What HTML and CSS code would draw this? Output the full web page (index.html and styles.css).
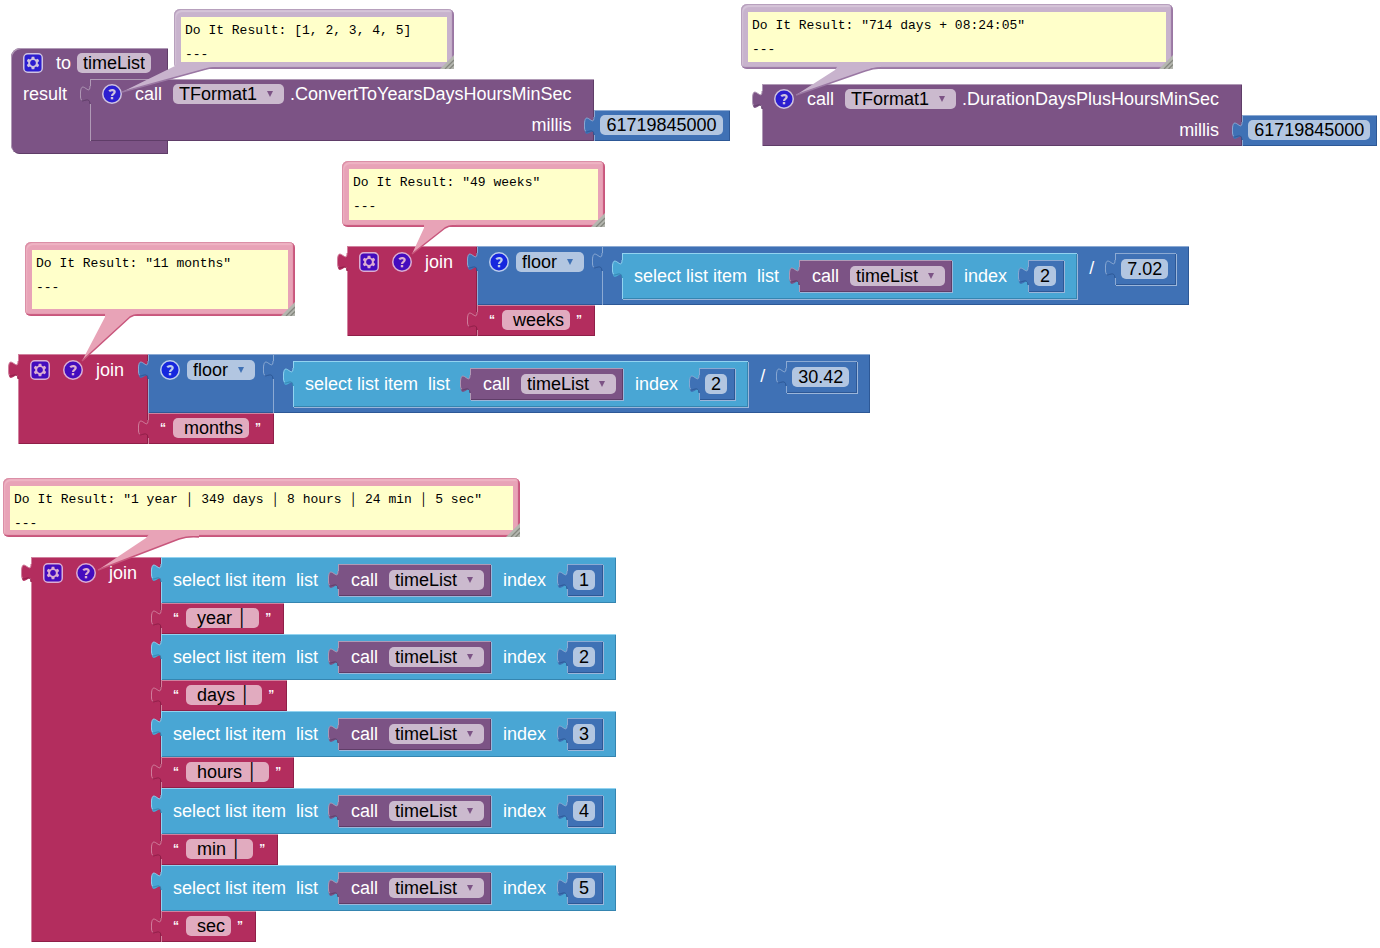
FILE: index.html
```html
<!DOCTYPE html>
<html lang="en">
<head>
<meta charset="utf-8">
<title>Blocks workspace</title>
<link rel="stylesheet" href="styles.css">
</head>
<body>
<svg class="defs" aria-hidden="true">
  <symbol id="tab" viewBox="0 0 12 18">
    <path class="tab-fill" d="M10,0 c0,12 -9.6,-9.6 -9.6,9 s9.6,-3 9.6,9 h2 V0 z"/>
    <path class="tab-dark" d="M1.5,14.5 C3,16.5 9.5,10 10,18"/>
    <path class="tab-light" d="M10,0 c0,12 -9.6,-9.6 -9.6,9 q0,4 1.2,5.4"/>
  </symbol>
  <symbol id="gear" viewBox="0 0 20 20">
    <rect class="icon-bg" x="0.75" y="0.75" width="18.5" height="18.5" rx="4"/>
    <path class="icon-fg" fill-rule="evenodd" d="M8.7,3.8 h2.6 l.4,1.9 1.3,.7 1.9,-.7 1.3,2.3 -1.4,1.3 v1.4 l1.4,1.3 -1.3,2.3 -1.9,-.7 -1.3,.7 -.4,1.9 h-2.6 l-.4,-1.9 -1.3,-.7 -1.9,.7 -1.3,-2.3 1.4,-1.3 v-1.4 l-1.4,-1.3 1.3,-2.3 1.9,.7 1.3,-.7 z M10,7.1 a2.9,2.9 0 1 0 .01,0 z"/>
  </symbol>
  <symbol id="help" viewBox="0 0 20 20">
    <circle class="icon-bg" cx="10" cy="10" r="9.25"/>
    <path class="icon-stroke" d="M7.2,7.2 C8.6,5.6 12.7,5.5 12.7,8 C12.7,9.8 10,9.8 10,12"/>
    <rect class="icon-fg" x="8.8" y="13" width="2.4" height="2.3"/>
  </symbol>
  <symbol id="grip" viewBox="0 0 14 14">
    <path fill="#b4b6af" d="M14,0 V14 H0 z"/>
    <path stroke="#85877f" stroke-width="1.3" d="M5,14 L14,5 M9.5,14 L14,9.5"/>
  </symbol>
</svg>

<main class="workspace">

  <section class="group at-procedure">
    <div class="procedure purple">
      <div class="row">
        <button class="icon" aria-label="Settings"><svg><use href="#gear"/></svg></button>
        <label for="proc">to</label>
        <input class="field" id="proc" value="timeList">
      </div>
      <div class="result-row">
        <span class="result">result</span>
        <div class="component">
          <div class="block purple method">
            <svg class="tab"><use href="#tab"/></svg>
            <div class="row">
              <button class="icon" aria-label="Comment"><svg><use href="#help"/></svg></button>
              <label class="verb" for="c1">call</label>
              <span class="drop"><select id="c1"><option>TFormat1</option></select></span>
              <span>.ConvertToYearsDaysHoursMinSec</span>
            </div>
            <label class="argument" for="n1">millis</label>
          </div>
          <div class="block blue value"><svg class="tab"><use href="#tab"/></svg><input class="field" id="n1" value="61719845000"></div>
        </div>
      </div>
    </div>
  </section>

  <section class="group at-duration">
    <div class="component">
      <div class="block purple method">
        <svg class="tab"><use href="#tab"/></svg>
        <div class="row">
          <button class="icon" aria-label="Comment"><svg><use href="#help"/></svg></button>
          <label class="verb" for="c2">call</label>
          <span class="drop"><select id="c2"><option>TFormat1</option></select></span>
          <span>.DurationDaysPlusHoursMinSec</span>
        </div>
        <label class="argument" for="n2">millis</label>
      </div>
      <div class="block blue value"><svg class="tab"><use href="#tab"/></svg><input class="field" id="n2" value="61719845000"></div>
    </div>
  </section>

  <section class="group join at-weeks">
    <div class="block magenta join-head">
      <svg class="tab"><use href="#tab"/></svg>
      <button class="icon" aria-label="Settings"><svg><use href="#gear"/></svg></button>
      <button class="icon" aria-label="Comment"><svg><use href="#help"/></svg></button>
      <span>join</span>
    </div>
    <div class="inputs">
      <div class="block blue floor">
        <svg class="tab"><use href="#tab"/></svg>
        <div class="floor-head">
          <button class="icon" aria-label="Comment"><svg><use href="#help"/></svg></button>
          <span class="drop"><select aria-label="Rounding"><option>floor</option></select></span>
        </div>
        <div class="block blue divide">
          <svg class="tab"><use href="#tab"/></svg>
          <div class="block sky select-item inset">
            <svg class="tab"><use href="#tab"/></svg>
            <span>select list item</span><span class="list">list</span>
            <div class="block purple getter inset"><svg class="tab"><use href="#tab"/></svg><label class="verb" for="w1">call</label><span class="drop"><select id="w1"><option>timeList</option></select></span></div>
            <label class="index" for="w2">index</label>
            <div class="block blue number inset"><svg class="tab"><use href="#tab"/></svg><input class="field" id="w2" value="2"></div>
          </div>
          <span class="operator">/</span>
          <div class="block blue number inset"><svg class="tab"><use href="#tab"/></svg><input class="field" aria-label="Divisor" value="7.02"></div>
        </div>
      </div>
      <div class="block magenta text"><svg class="tab"><use href="#tab"/></svg><span class="quote">“</span><input class="field" aria-label="Text" value=" weeks"><span class="quote">”</span></div>
    </div>
  </section>

  <section class="group join at-months">
    <div class="block magenta join-head">
      <svg class="tab"><use href="#tab"/></svg>
      <button class="icon" aria-label="Settings"><svg><use href="#gear"/></svg></button>
      <button class="icon" aria-label="Comment"><svg><use href="#help"/></svg></button>
      <span>join</span>
    </div>
    <div class="inputs">
      <div class="block blue floor">
        <svg class="tab"><use href="#tab"/></svg>
        <div class="floor-head">
          <button class="icon" aria-label="Comment"><svg><use href="#help"/></svg></button>
          <span class="drop"><select aria-label="Rounding"><option>floor</option></select></span>
        </div>
        <div class="block blue divide">
          <svg class="tab"><use href="#tab"/></svg>
          <div class="block sky select-item inset">
            <svg class="tab"><use href="#tab"/></svg>
            <span>select list item</span><span class="list">list</span>
            <div class="block purple getter inset"><svg class="tab"><use href="#tab"/></svg><label class="verb" for="m1">call</label><span class="drop"><select id="m1"><option>timeList</option></select></span></div>
            <label class="index" for="m2">index</label>
            <div class="block blue number inset"><svg class="tab"><use href="#tab"/></svg><input class="field" id="m2" value="2"></div>
          </div>
          <span class="operator">/</span>
          <div class="block blue number inset"><svg class="tab"><use href="#tab"/></svg><input class="field" aria-label="Divisor" value="30.42"></div>
        </div>
      </div>
      <div class="block magenta text"><svg class="tab"><use href="#tab"/></svg><span class="quote">“</span><input class="field" aria-label="Text" value=" months"><span class="quote">”</span></div>
    </div>
  </section>

  <section class="group join at-summary">
    <div class="block magenta join-head">
      <svg class="tab"><use href="#tab"/></svg>
      <button class="icon" aria-label="Settings"><svg><use href="#gear"/></svg></button>
      <button class="icon" aria-label="Comment"><svg><use href="#help"/></svg></button>
      <span>join</span>
    </div>
    <div class="inputs">
      <div class="block sky select-item">
        <svg class="tab"><use href="#tab"/></svg>
        <span>select list item</span><span class="list">list</span>
        <div class="block purple getter inset"><svg class="tab"><use href="#tab"/></svg><label class="verb" for="a1">call</label><span class="drop"><select id="a1"><option>timeList</option></select></span></div>
        <label class="index" for="b1">index</label>
        <div class="block blue number inset"><svg class="tab"><use href="#tab"/></svg><input class="field" id="b1" value="1"></div>
      </div>
      <div class="block magenta text"><svg class="tab"><use href="#tab"/></svg><span class="quote">“</span><input class="field" aria-label="Text" value=" year │ "><span class="quote">”</span></div>
      <div class="block sky select-item">
        <svg class="tab"><use href="#tab"/></svg>
        <span>select list item</span><span class="list">list</span>
        <div class="block purple getter inset"><svg class="tab"><use href="#tab"/></svg><label class="verb" for="a2">call</label><span class="drop"><select id="a2"><option>timeList</option></select></span></div>
        <label class="index" for="b2">index</label>
        <div class="block blue number inset"><svg class="tab"><use href="#tab"/></svg><input class="field" id="b2" value="2"></div>
      </div>
      <div class="block magenta text"><svg class="tab"><use href="#tab"/></svg><span class="quote">“</span><input class="field" aria-label="Text" value=" days │ "><span class="quote">”</span></div>
      <div class="block sky select-item">
        <svg class="tab"><use href="#tab"/></svg>
        <span>select list item</span><span class="list">list</span>
        <div class="block purple getter inset"><svg class="tab"><use href="#tab"/></svg><label class="verb" for="a3">call</label><span class="drop"><select id="a3"><option>timeList</option></select></span></div>
        <label class="index" for="b3">index</label>
        <div class="block blue number inset"><svg class="tab"><use href="#tab"/></svg><input class="field" id="b3" value="3"></div>
      </div>
      <div class="block magenta text"><svg class="tab"><use href="#tab"/></svg><span class="quote">“</span><input class="field" aria-label="Text" value=" hours │ "><span class="quote">”</span></div>
      <div class="block sky select-item">
        <svg class="tab"><use href="#tab"/></svg>
        <span>select list item</span><span class="list">list</span>
        <div class="block purple getter inset"><svg class="tab"><use href="#tab"/></svg><label class="verb" for="a4">call</label><span class="drop"><select id="a4"><option>timeList</option></select></span></div>
        <label class="index" for="b4">index</label>
        <div class="block blue number inset"><svg class="tab"><use href="#tab"/></svg><input class="field" id="b4" value="4"></div>
      </div>
      <div class="block magenta text"><svg class="tab"><use href="#tab"/></svg><span class="quote">“</span><input class="field" aria-label="Text" value=" min │ "><span class="quote">”</span></div>
      <div class="block sky select-item">
        <svg class="tab"><use href="#tab"/></svg>
        <span>select list item</span><span class="list">list</span>
        <div class="block purple getter inset"><svg class="tab"><use href="#tab"/></svg><label class="verb" for="a5">call</label><span class="drop"><select id="a5"><option>timeList</option></select></span></div>
        <label class="index" for="b5">index</label>
        <div class="block blue number inset"><svg class="tab"><use href="#tab"/></svg><input class="field" id="b5" value="5"></div>
      </div>
      <div class="block magenta text"><svg class="tab"><use href="#tab"/></svg><span class="quote">“</span><input class="field" aria-label="Text" value=" sec"><span class="quote">”</span></div>
    </div>
  </section>

  <div class="comment lilac note-procedure">
    <textarea aria-label="Comment">Do It Result: [1, 2, 3, 4, 5]
---</textarea>
    <svg class="tail"><path class="tail-fill" d="M3,55 L1,57 L-52,83 L33,60 Q38,58 46,58 V55 z"/><path class="tail-edge" d="M46,59 Q38,58 32,60 L-52,83"/></svg>
    <svg class="grip"><use href="#grip"/></svg>
  </div>
  <div class="comment lilac note-duration">
    <textarea aria-label="Comment">Do It Result: "714 days + 08:24:05"
---</textarea>
    <svg class="tail"><path class="tail-fill" d="M98,60 L94,66 L55,91 L124,67 Q132,63 140,63 V60 z"/><path class="tail-edge" d="M140,64 Q132,64 124,67 L55,91"/></svg>
    <svg class="grip"><use href="#grip"/></svg>
  </div>
  <div class="comment pink note-weeks">
    <textarea aria-label="Comment">Do It Result: "49 weeks"
---</textarea>
    <svg class="tail"><path class="tail-fill" d="M82,61 L82,67 L70,93 L103,67 Q108,64 114,64 V61 z"/><path class="tail-edge" d="M114,65 Q108,64 103,67 L70,93"/></svg>
    <svg class="grip"><use href="#grip"/></svg>
  </div>
  <div class="comment pink note-months">
    <textarea aria-label="Comment">Do It Result: "11 months"
---</textarea>
    <svg class="tail"><path class="tail-fill" d="M80,69 L80,75 L57,119 L105,75 Q110,72 116,72 V69 z"/><path class="tail-edge" d="M116,73 Q110,72 105,75 L57,119"/></svg>
    <svg class="grip"><use href="#grip"/></svg>
  </div>
  <div class="comment pink note-summary">
    <textarea aria-label="Comment">Do It Result: "1 year │ 349 days │ 8 hours │ 24 min │ 5 sec"
---</textarea>
    <svg class="tail"><path class="tail-fill" d="M147,55 L143,60 L95,92 L176,61 Q185,58 196,58 V55 z"/><path class="tail-edge" d="M196,59 Q185,58 176,61 L95,92"/></svg>
    <svg class="grip"><use href="#grip"/></svg>
  </div>

</main>
</body>
</html>
```

FILE: styles.css
```css
* { box-sizing: border-box; }

body {
  margin: 0;
  background: #fff;
  color: #fff;
  font: 18px/20px "Liberation Sans", Arial, sans-serif;
}

.defs { position: absolute; width: 0; height: 0; }

.workspace { position: relative; min-height: 100vh; overflow: hidden; }

/* Palette */
.purple  { --fill: #7c5385; --light: #b09ab6; --dark: #5f3d68; --field: #cbbace; --icon: #2c1ed0; --ring: #cfc3df; }
.blue    { --fill: #3f71b5; --light: #8caad3; --dark: #2d5896; --field: #b2c6e1; --icon: #1627de; --ring: #bccdec; }
.magenta { --fill: #b32d5e; --light: #d1819e; --dark: #8f1f48; --field: #e1abbf; --icon: #440cbe; --ring: #dcaed2; }
.sky     { --fill: #49a6d4; --light: #92d3f0; --dark: #3585b0; --field: #b6dbee; }

/* Top-level stacks sit at free positions on the canvas */
.group { position: absolute; white-space: nowrap; }
.at-procedure { left: 11px; top: 48px; }
.at-duration { left: 762px; top: 84px; }
.at-weeks { left: 347px; top: 246px; }
.at-months { left: 18px; top: 354px; }
.at-summary { left: 31px; top: 557px; }

/* Shared block parts */
.block {
  position: relative;
  background: var(--fill);
  box-shadow: inset 1px 1px var(--light), inset -1px -1px var(--dark);
}
.inset { box-shadow: inset 1px 1px var(--light), inset -1px -1px var(--dark), 1px 1px #9bb6da; }

.tab { position: absolute; left: -10px; top: 7px; width: 12px; height: 18px; }
.tab-fill { fill: var(--fill); }
.tab-light { fill: none; stroke: var(--light); stroke-width: 1; }
.tab-dark { fill: none; stroke: var(--dark); stroke-width: 1; }

.icon { flex: none; width: 20px; height: 20px; margin: 0; padding: 0; border: 0; background: none; }
.icon svg { display: block; width: 20px; height: 20px; }
.icon-bg { fill: var(--icon); stroke: var(--ring); stroke-width: 1.5; }
.icon-fg { fill: var(--ring); }
.icon-stroke { fill: none; stroke: var(--ring); stroke-width: 2.2; }

.field,
.drop select {
  display: block;
  height: 20px;
  margin: 0;
  border: 0;
  border-radius: 5px;
  background: var(--field);
  color: #000;
  font: inherit;
  outline: 0;
}
.field { field-sizing: content; padding: 0 6px; }
.drop { position: relative; }
.drop select { appearance: none; padding: 0 26px 0 6px; }
.drop::after {
  content: "";
  position: absolute;
  right: 11px;
  top: 7px;
  border: solid transparent;
  border-width: 6px 3px 0;
  border-top-color: var(--fill);
  pointer-events: none;
}

.verb { margin-right: 5px; }
.row { display: flex; gap: 6px; padding: 5px 23px 6px 12px; }
.row .icon { margin-right: 7px; }

/* Procedure definition: the returned block runs past its right edge */
.procedure {
  width: 157px;
  padding-bottom: 13px;
  border-radius: 9px 0 0 9px;
  background: var(--fill);
  box-shadow: inset 1px 1px var(--light), inset -1px -1px var(--dark);
}
.result-row { display: flex; }
.result { padding: 5px 23px 0 12px; }

.component { display: flex; align-items: flex-end; }
.argument { display: block; padding: 5px 23px 6px; text-align: right; }
.value { padding: 5px 7px 6px 6px; }

/* Text join */
.join { display: flex; }
.join-head { display: flex; gap: 13px; padding: 6px 24px 0 12px; }
.inputs { display: flex; flex-direction: column; align-items: flex-start; }
.text { display: flex; gap: 6px; padding: 5px 13px 6px 12px; }
.quote { font-size: 12px; font-weight: bold; }
.quote:first-of-type { margin-right: 1px; }
.quote:last-of-type { margin-right: 0; }

/* Math */
.floor { display: flex; }
.floor-head { display: flex; gap: 7px; padding: 6px 18px 0 12px; }
.divide { display: flex; align-items: flex-start; padding: 7px 13px 6px 20px; }
.operator { padding: 5px 21px 0 12px; }

/* Lists */
.select-item { display: flex; align-items: center; padding: 7px 13px 7px 12px; }
.list { margin: 0 20px 0 10px; }
.index { margin: 0 21px 0 12px; }
.getter { display: flex; gap: 6px; padding: 6px 7px 6px 13px; }
.number { padding: 6px 8px 6px 6px; }

/* Comment bubbles */
.comment {
  position: absolute;
  display: flex;
  padding: 8px 7px 7px;
  border-radius: 6px;
  background: var(--bubble);
  box-shadow: inset -2px -2px 1px var(--edge), inset 1px 1px 1px var(--rim), inset 2px 3px 1px var(--shine);
}
.lilac { --bubble: #c8b3cd; --edge: #9a77a3; --rim: #b49cba; --shine: #d6c6da; }
.pink { --bubble: #e8a3b7; --edge: #c8567c; --rim: #d98ba3; --shine: #efb5c5; }

.comment textarea {
  flex: 1;
  margin: 0;
  padding: 2px 4px;
  border: 0;
  background: #ffffca;
  color: #000;
  font: 13px/24px "Liberation Mono", "Courier New", monospace;
  overflow: hidden;
  resize: none;
  outline: 0;
}
.tail { position: absolute; left: 0; top: 0; width: 1px; height: 1px; overflow: visible; pointer-events: none; }
.tail-fill { fill: var(--bubble); }
.tail-edge { fill: none; stroke: var(--edge); stroke-width: 1.5; }
.grip { position: absolute; right: 0; bottom: 0; width: 14px; height: 14px; }

.note-procedure { left: 174px; top: 9px; width: 280px; height: 60px; }
.note-duration { left: 741px; top: 4px; width: 432px; height: 65px; }
.note-weeks { left: 342px; top: 161px; width: 263px; height: 66px; }
.note-months { left: 25px; top: 242px; width: 270px; height: 74px; }
.note-summary { left: 3px; top: 478px; width: 517px; height: 59px; }
```
